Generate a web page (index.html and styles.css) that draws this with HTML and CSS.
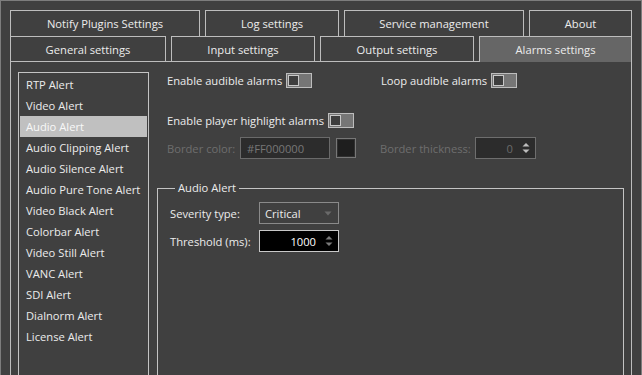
FILE: index.html
```html
<!DOCTYPE html>
<html>
<head>
<meta charset="utf-8">
<link rel="stylesheet" href="styles.css">
</head>
<body>
<div class="window">
  <div class="tabrow row1">
    <div class="tab w-notify">Notify Plugins Settings</div>
    <div class="tab w-log">Log settings</div>
    <div class="tab w-service">Service management</div>
    <div class="tab w-about">About</div>
  </div>
  <div class="tabrow row2">
    <div class="tab w-general">General settings</div>
    <div class="tab w-input">Input settings</div>
    <div class="tab w-output">Output settings</div>
    <div class="tab w-alarms selected">Alarms settings</div>
  </div>
  <div class="pane">
    <div class="list">
      <div class="item">RTP Alert</div>
      <div class="item">Video Alert</div>
      <div class="item active">Audio Alert</div>
      <div class="item">Audio Clipping Alert</div>
      <div class="item">Audio Silence Alert</div>
      <div class="item">Audio Pure Tone Alert</div>
      <div class="item">Video Black Alert</div>
      <div class="item">Colorbar Alert</div>
      <div class="item">Video Still Alert</div>
      <div class="item">VANC Alert</div>
      <div class="item">SDI Alert</div>
      <div class="item">Dialnorm Alert</div>
      <div class="item">License Alert</div>
    </div>
    <div class="content">
      <div class="options">
        <div class="row row-a">
          <div class="pair pair-first">
            <span class="label">Enable audible alarms</span>
            <span class="toggle"><span class="knob"></span></span>
          </div>
          <div class="pair">
            <span class="label">Loop audible alarms</span>
            <span class="toggle"><span class="knob"></span></span>
          </div>
        </div>
        <div class="row row-b">
          <div class="pair">
            <span class="label">Enable player highlight alarms</span>
            <span class="toggle"><span class="knob"></span></span>
          </div>
        </div>
        <div class="row row-c">
          <span class="label disabled lbl-color">Border color:</span>
          <span class="textbox">#FF000000</span>
          <span class="swatch"><span class="swatch-fill"></span></span>
          <span class="label disabled lbl-thick">Border thickness:</span>
          <span class="spin spin-disabled">
            <span class="spin-value">0</span>
            <span class="arrows">
              <svg width="8" height="12" viewBox="0 0 8 12"><path d="M0.5 4.5 L4 1 L7.5 4.5 Z" fill="#bdbdbd"/><path d="M0.5 7.5 L4 11 L7.5 7.5 Z" fill="#bdbdbd"/></svg>
            </span>
          </span>
        </div>
      </div>
      <fieldset class="group">
        <legend>Audio Alert</legend>
        <div class="grow first">
          <span class="glabel">Severity type:</span>
          <span class="combo">
            <span class="combo-text">Critical</span>
            <svg width="8" height="5" viewBox="0 0 8 5"><path d="M0.5 0.5 L7.5 0.5 L4 4.5 Z" fill="#6a6a6a"/></svg>
          </span>
        </div>
        <div class="grow">
          <span class="glabel">Threshold (ms):</span>
          <span class="spin spin-active">
            <span class="spin-value">1000</span>
            <span class="arrows">
              <svg width="8" height="12" viewBox="0 0 8 12"><path d="M0.5 4.5 L4 1 L7.5 4.5 Z" fill="#7a7a7a"/><path d="M0.5 7.5 L4 11 L7.5 7.5 Z" fill="#7a7a7a"/></svg>
            </span>
          </span>
        </div>
      </fieldset>
    </div>
  </div>
</div>
</body>
</html>
```

FILE: styles.css
```css
html, body {
  margin: 0;
  padding: 0;
  background: #404040;
}
body {
  font-family: "Open Sans", "Noto Sans", sans-serif;
  font-size: 11.2px;
  color: #ececec;
}
.window {
  width: 642px;
  height: 375px;
  box-sizing: border-box;
  border: 1px solid #7d7d7d;
  border-bottom: none;
  padding: 9px 9px 0 9px;
  overflow: hidden;
  background: #404040;
}
.tabrow {
  display: flex;
  gap: 5px;
}
.tab {
  box-sizing: border-box;
  border: 1px solid #bdbdbd;
  border-bottom: none;
  display: flex;
  align-items: center;
  justify-content: center;
  white-space: nowrap;
  color: #ececec;
}
.row1 .tab { height: 26px; }
.row2 .tab { height: 25px; }
.w-notify { width: 190px; }
.w-log { width: 134px; }
.w-service { width: 180px; }
.w-about { width: 103px; }
.w-general { width: 156px; }
.w-input { width: 144px; }
.w-output { width: 154px; }
.w-alarms { width: 153px; }
.tab.selected {
  background: #666666;
  height: 26px;
  margin-bottom: -1px;
  position: relative;
  z-index: 1;
  padding-bottom: 1px;
}
.pane {
  box-sizing: border-box;
  border: 1px solid #bdbdbd;
  border-bottom: none;
  height: 330px;
  display: flex;
  gap: 8px;
  padding: 10px 7px 0 7px;
}
.list {
  width: 131px;
  flex: none;
  box-sizing: border-box;
  border: 1px solid #c4c4c4;
  padding: 1px;
  height: 320px;
}
.item {
  height: 21px;
  line-height: 21px;
  padding-left: 6px;
  white-space: nowrap;
  color: #ececec;
}
.item.active {
  background: #c0c0c0;
  color: #f8f8f8;
}
.content {
  flex: 1;
  min-width: 0;
  display: flex;
  flex-direction: column;
}
.options {
  padding-left: 10px;
}
.row {
  display: flex;
  align-items: center;
}
.row-a { height: 16px; }
.row-b { height: 16px; margin-top: 24px; }
.row-c { height: 22px; margin-top: 9px; }
.pair {
  display: flex;
  align-items: center;
}
.pair-first { width: 214px; }
.label { white-space: nowrap; flex: none; }
.toggle {
  margin-left: 4px;
  width: 26px;
  height: 15px;
  flex: none;
  box-sizing: border-box;
  border: 1px solid #bdbdbd;
  background: #767676;
  padding: 1px;
  display: flex;
  align-items: center;
}
.knob {
  width: 11px;
  height: 11px;
  box-sizing: border-box;
  border: 1px solid #c8c8c8;
  background: #3e3e3e;
}
.disabled { color: #6e6e6e; }
.lbl-color { width: 73px; }
.textbox {
  width: 90px;
  height: 22px;
  flex: none;
  box-sizing: border-box;
  border: 1px solid #6a6a6a;
  background: #2c2c2c;
  color: #777777;
  padding-left: 6px;
  display: flex;
  align-items: center;
}
.swatch {
  margin-left: 6px;
  width: 20px;
  height: 20px;
  flex: none;
  box-sizing: border-box;
  border: 1px solid #777777;
  padding: 1px;
  background: #303030;
}
.swatch-fill {
  display: block;
  width: 100%;
  height: 100%;
  background: #1e1e1e;
}
.lbl-thick {
  margin-left: 24px;
  width: 95px;
}
.spin {
  width: 61px;
  height: 22px;
  flex: none;
  box-sizing: border-box;
  display: flex;
  align-items: center;
}
.spin-disabled {
  border: 1px solid #6e6e6e;
  background: #2c2c2c;
  color: #6a6a6a;
}
.spin-active {
  border: 1px solid #c8c8c8;
  background: #000000;
  color: #ffffff;
  width: 80px;
}
.spin-value {
  flex: 1;
  text-align: right;
  padding-right: 4px;
}
.arrows {
  width: 18px;
  display: flex;
  align-items: center;
  justify-content: center;
}
.arrows svg { display: block; }
.group {
  margin: 21px 0 0 0;
  padding: 0 0 0 12px;
  border: 1px solid #c4c4c4;
  border-bottom: none;
  height: 250px;
  min-width: 0;
}
.group legend {
  margin-left: 5px;
  padding: 0 3px;
  line-height: 16px;
  color: #ececec;
}
.grow {
  display: flex;
  align-items: center;
  margin-top: 6px;
}
.glabel {
  width: 89px;
  flex: none;
  white-space: nowrap;
}
.combo {
  width: 80px;
  height: 22px;
  flex: none;
  box-sizing: border-box;
  border: 1px solid #8a8a8a;
  display: flex;
  align-items: center;
  padding: 0 6px 0 5px;
  justify-content: space-between;
}
```
